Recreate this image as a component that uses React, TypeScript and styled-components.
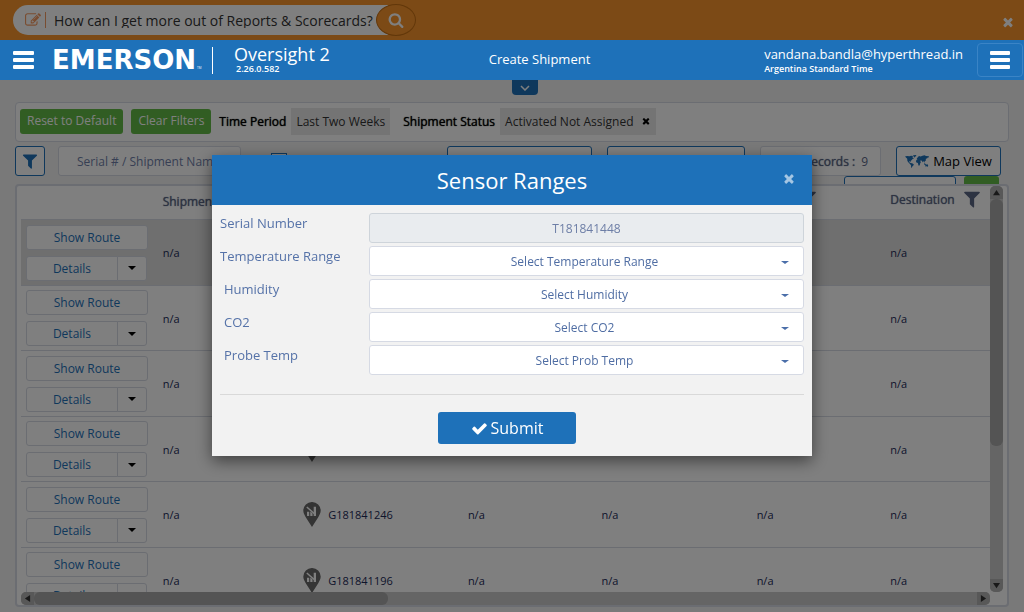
import React from 'react';
import styled, { createGlobalStyle } from 'styled-components';

const blue = '#1e71b9';
const green = '#62bb46';
const line = '#d6dae4';

const Global = createGlobalStyle`
  *, *::before, *::after { box-sizing: border-box; }
  body {
    margin: 0;
    background: #f2f2f2;
    font-family: 'Open Sans', 'Noto Sans', sans-serif;
    font-size: 13px;
    color: #1b2a57;
  }
  button, input, select { font: inherit; margin: 0; }
`;

const paths = {
  search:
    'M1216 832q0-185-131.5-316.5t-316.5-131.5-316.5 131.5-131.5 316.5 131.5 316.5 316.5 131.5 316.5-131.5 131.5-316.5zm512 832q0 52-38 90t-90 38q-54 0-90-38l-343-342q-179 124-399 124-143 0-273.5-55.5t-225-150-150-225-55.5-273.5 55.5-273.5 150-225 225-150 273.5-55.5 273.5 55.5 225 150 150 225 55.5 273.5q0 220-124 399l343 343q37 37 37 90z',
  times:
    'M1490 1322q0 40-28 68l-136 136q-28 28-68 28t-68-28l-294-294-294 294q-28 28-68 28t-68-28l-136-136q-28-28-28-68t28-68l294-294-294-294q-28-28-28-68t28-68l136-136q28-28 68-28t68 28l294 294 294-294q28-28 68-28t68 28l136 136q28 28 28 68t-28 68l-294 294 294 294q28 28 28 68z',
  check:
    'M1671 566q0 40-28 68l-724 724-136 136q-28 28-68 28t-68-28l-136-136-362-362q-28-28-28-68t28-68l136-136q28-28 68-28t68 28l294 295 656-657q28-28 68-28t68 28l136 136q28 28 28 68z',
  filter:
    'M1595 295q17 41-14 70l-493 493v742q0 42-39 59-13 5-25 5-27 0-45-19l-256-256q-19-19-19-45v-486l-493-493q-31-29-14-70 17-39 59-39h1280q42 0 59 39z',
  edit:
    'M888 1184l116-116-152-152-116 116v56h96v96h56zm440-720q-16-16-33 1l-350 350q-17 17-1 33t33-1l350-350q17-17 1-33zm80 594v190q0 119-84.5 203.5t-203.5 84.5h-832q-119 0-203.5-84.5t-84.5-203.5v-832q0-119 84.5-203.5t203.5-84.5h832q63 0 117 25 15 7 18 23 3 17-9 29l-49 49q-14 14-32 8-23-6-45-6h-832q-66 0-113 47t-47 113v832q0 66 47 113t113 47h832q66 0 113-47t47-113v-126q0-13 9-22l64-64q15-15 35-7t20 29zm-96-738l288 288-672 672h-288v-288zm444 132l-92 92-288-288 92-92q28-28 68-28t68 28l152 152q28 28 28 68t-28 68z',
};

const Icon = ({ name, size, color = 'currentColor' }: { name: keyof typeof paths; size: number; color?: string }) => (
  <svg width={size} height={size} viewBox="0 0 1792 1792" fill={color} aria-hidden="true">
    <path d={paths[name]} />
  </svg>
);

const Bars = ({ width }: { width: number }) => (
  <svg width={width} height="18" viewBox="0 0 20 18" preserveAspectRatio="none" fill="#fff" aria-hidden="true">
    <rect width="20" height="4" rx="1" />
    <rect y="7" width="20" height="4" rx="1" />
    <rect y="14" width="20" height="4" rx="1" />
  </svg>
);

const WorldMap = () => (
  <svg width="24" height="13" viewBox="0 0 24 13" fill={blue} aria-hidden="true">
    <path d="M0 1.6 2 1l2.5.3L6 .8 8 1l-.6 1.2L9 3.4 7.6 4 6.8 5 5.7 6 5.9 7 4.5 6.3 4 6.8l1 1L6 8l1.600.5 1.300 1L8 11l-1 .8L6.400 13 6 12.700 6.100 10.500 5 8.900 3.500 7.500 2.400 6 2.200 3.800 1.200 2.800Z" />
    <path d="M8 .3 11 0l.4 1L10 1.800 9.200 2.700 8.600 1.500Z" />
    <path d="M12 3.200 13 2l1-1 1.600.5L17.500.8 19.500.3 21 .9l3 .3-.4 1.200-1.300.4-.3 1.200-.6-.8-.7.8.3 1.200L20 6.200l-.6.6.4 1-.9-.7-.6-1-.6 1.400-.8-1.700-1.100-.2-.8.4 1 .9-.8 1.400-.4 1.700-.9 1-.7-1.400-.3-1.600-1.500-.6-.5-1.500.8-1.200.9-.3-.9-.3Z" />
    <path d="m19 8.300 1.300.4.9 1.100 1-.8 1 1.400-.3 1.300-1.400-.4-1.300.2.200-1.300-1.400-1Z" />
  </svg>
);

const PinIcon = () => (
  <svg width="18" height="25" viewBox="0 0 18 25" aria-hidden="true">
    <path d="M9 0a8.600 8.600 0 0 1 8.700 8.600c0 2.400-1.100 4.300-2.300 6.300L9 25 2.600 14.900C1.400 12.900.3 11 .3 8.600A8.600 8.600 0 0 1 9 0Z" fill="#686868" />
    <path d="M4 14V9.800h2.200V14Zm3.300 0V9.500l2.200 1.800V14Zm3.400 0V4.800H13V14Z" fill="#fff" />
    <path d="m3.800 5 7.700 6.800" stroke="#fff" strokeWidth="1.500" />
  </svg>
);

const Caret = styled.span`
  border: 4px solid transparent;
  border-top-color: currentColor;
  border-bottom: 0;
`;

/* ---------- page ---------- */

const Page = styled.div`
  height: 100vh;
  min-height: 400px;
  display: flex;
  flex-direction: column;
  overflow: hidden;
`;

const IconButton = styled.button`
  display: flex;
  align-items: center;
  justify-content: center;
  padding: 0;
  border: 0;
  background: none;
  color: inherit;
`;

const Banner = styled.div`
  flex: none;
  height: 40px;
  padding: 3px 9px 0 13px;
  display: flex;
  align-items: center;
  justify-content: space-between;
  background: #f8942c;
  color: #fff;
`;

const Ask = styled.form`
  height: 40px;
  margin-top: -3px;
  display: flex;
  align-items: center;
`;

const AskField = styled.label`
  height: 30px;
  padding-left: 12px;
  display: flex;
  align-items: center;
  gap: 4px;
  background: #fff;
  color: #f39a62;
  border-radius: 15px 0 0 15px;
`;

const AskInput = styled.input`
  width: 343px;
  height: 16px;
  padding: 0 0 0 8px;
  border: 0;
  border-left: 1px solid #f39a62;
  background: none;
  color: #333;
  font-size: 14px;
`;

const AskButton = styled(IconButton)`
  width: 40px;
  height: 32px;
  margin-left: -12px;
  border: 1px solid #c56f14;
  border-radius: 50%;
  background: #f8942c;
`;

const Nav = styled.header`
  position: relative;
  z-index: 20;
  flex: none;
  height: 40px;
  padding: 0 1px 0 13px;
  display: grid;
  grid-template-columns: 1fr auto 1fr;
  align-items: center;
  background: ${blue};
  color: #fff;
`;

const Brand = styled.div`
  display: flex;
  align-items: center;
`;

const Logo = styled.svg`
  margin-left: 19px;
  overflow: visible;
`;

const Product = styled.div`
  margin-left: 11px;
  padding-left: 21px;
  height: 27px;
  border-left: 1px solid #fff;
  display: flex;
  flex-direction: column;
  justify-content: center;
`;

const ProductName = styled.span`
  font-size: 18px;
  line-height: 18px;
`;

const Version = styled.span`
  padding-left: 2px;
  font-size: 9px;
  line-height: 12px;
  font-weight: 600;
`;

const NavLink = styled.a`
  margin-left: 43px;
  padding-bottom: 2px;
  color: #fff;
  text-decoration: none;
`;

const Account = styled.div`
  display: flex;
  align-items: center;
  justify-content: flex-end;
  gap: 14px;
`;

const User = styled.div`
  display: flex;
  flex-direction: column;
  line-height: 18px;
`;

const Zone = styled.span`
  font-size: 9px;
  line-height: 12px;
  font-weight: 600;
`;

const MenuButton = styled(IconButton)`
  width: 46px;
  height: 34px;
  border: 1px solid #3a84c6;
  border-radius: 4px;
`;

const PullTab = styled(IconButton)`
  flex: none;
  align-self: center;
  width: 26px;
  height: 15px;
  margin-left: 26px;
  border-radius: 0 0 4px 4px;
  background: ${blue};
  color: #fff;
`;

const Main = styled.main`
  flex: 1;
  min-height: 0;
  padding: 7px 15px 5px;
  display: flex;
  flex-direction: column;
`;

const Filters = styled.section`
  flex: none;
  height: 40px;
  padding: 0 4px 2px;
  display: flex;
  align-items: center;
  border: 1px solid ${line};
  border-radius: 4px;
  background: #fff;
  font-size: 12px;
`;

const GreenButton = styled.button`
  height: 25px;
  margin-right: 8px;
  padding: 0 7px;
  border: 0;
  border-radius: 3px;
  background: ${green};
  color: #fff;
  line-height: 24px;
`;

const FilterName = styled.span`
  color: #000;
  text-shadow: 0 0 1px currentColor;
`;

const Chip = styled.span`
  height: 27px;
  margin: 0 13px 0 5px;
  padding: 0 5px;
  display: flex;
  align-items: center;
  gap: 7px;
  background: #e9e9e9;
  color: #333;
`;

const ChipClose = styled(IconButton)`
  color: #000;
`;

const Toolbar = styled.div`
  flex: none;
  height: 30px;
  margin-top: 4px;
  padding-right: 8px;
  display: flex;
  align-items: center;
`;

const ToolGroup = styled.div`
  margin-left: auto;
  display: flex;
  gap: 15px;
`;

const Box = styled.button<{ $w: number }>`
  width: ${(p) => p.$w}px;
  height: 30px;
  padding: 0;
  display: flex;
  align-items: center;
  justify-content: center;
  gap: 4px;
  border: 1px solid ${blue};
  border-radius: 3px;
  background: #fff;
  color: #000;
`;

const Search = styled.input`
  width: 183px;
  height: 30px;
  margin: 0 30px 0 13px;
  padding: 0 18px;
  border: 1px solid ${line};
  border-radius: 3px;
  background: #fff;
  font-size: 12px;
  &::placeholder { color: #6f7fa8; opacity: 1; }
`;

const Tick = styled.input`
  appearance: none;
  width: 16px;
  height: 16px;
  border: 1px solid ${blue};
  background: #fff;
`;

const Records = styled.div`
  width: 121px;
  height: 30px;
  display: flex;
  align-items: center;
  justify-content: flex-end;
  gap: 6px;
  padding-right: 12px;
  border: 1px solid ${line};
  border-radius: 3px;
  background: #fff;
  color: #5a6685;
  font-size: 12px;
`;

const RecordsName = styled.span`
  text-shadow: 0 0 1px currentColor;
`;

const Tucked = styled.div`
  flex: none;
  height: 8px;
  padding-right: 10px;
  overflow: hidden;
  display: flex;
  justify-content: flex-end;
  gap: 8px;
`;

const Tuck = styled(GreenButton)`
  width: 35px;
  margin: 0;
`;

/* ---------- table ---------- */

const Panel = styled.section`
  flex: 1;
  min-height: 0;
  padding: 0 4px 0 4px;
  display: grid;
  grid-template-columns: minmax(0, 1fr) 13px;
  grid-template-rows: minmax(0, 1fr) 13px;
  border: 2px solid ${line};
  border-radius: 4px;
  background: #fff;
`;

const Viewport = styled.div`
  overflow: hidden;
`;

const Table = styled.table`
  width: 100%;
  table-layout: fixed;
  border-collapse: separate;
  border-spacing: 0;
  font-size: 11px;
`;

const Th = styled.th`
  height: 33px;
  padding: 0 0 2px 6px;
  text-align: left;
  font-size: 12px;
  font-weight: 400;
  color: #5a6685;
  white-space: nowrap;
  text-shadow: 0 0 1px currentColor;
`;

const ThInner = styled.span`
  display: flex;
  align-items: center;
  gap: 7px;
  padding-bottom: 5px;
`;

const Row = styled.tr<{ $selected?: boolean }>`
  height: 65px;
  background: ${(p) => (p.$selected ? '#dedede' : '#fff')};
  &:nth-child(odd) { height: 66px; }
`;

const Td = styled.td`
  padding: 0 0 0 6px;
  border-top: 1px solid ${line};
  &:first-child { padding-left: 5px; }
`;

const Actions = styled.div`
  display: flex;
  flex-direction: column;
  gap: 6px;
`;

const RouteButton = styled.button`
  width: 122px;
  height: 25px;
  padding: 0;
  border: 1px solid ${line};
  border-radius: 3px;
  background: #fff;
  color: ${blue};
  font-size: 12px;
`;

const Split = styled.div`
  display: flex;
`;

const DetailsButton = styled(RouteButton)`
  width: 92px;
  border-radius: 3px 0 0 3px;
`;

const MoreButton = styled(RouteButton)`
  width: 30px;
  margin-left: -1px;
  border-radius: 0 3px 3px 0;
  color: #000;
  display: flex;
  align-items: center;
  justify-content: center;
`;

const Serial = styled.div`
  display: flex;
  align-items: center;
  gap: 7px;
`;

const Scroll = styled.div<{ $horizontal?: boolean }>`
  display: flex;
  flex-direction: ${(p) => (p.$horizontal ? 'row' : 'column')};
  border-radius: 5px;
  overflow: hidden;
  background: #cacaca;
`;

const ScrollEnd = styled.span`
  flex: none;
  width: 13px;
  height: 13px;
  display: flex;
  align-items: center;
  justify-content: center;
  background: #b0b0b0;
  color: #333;
`;

const Thumb = styled.span<{ $share: number }>`
  flex: ${(p) => p.$share} 0 0;
  border-radius: 6px;
  background: #a8a8a8;
`;

const Rest = styled.span<{ $share: number }>`
  flex: ${(p) => p.$share} 0 0;
`;

const Arrow = ({ turn }: { turn: number }) => (
  <svg width="7" height="7" viewBox="0 0 8 8" fill="currentColor" aria-hidden="true">
    <path d="M4 1 8 7H0Z" transform={`rotate(${turn} 4 4)`} />
  </svg>
);

/* ---------- dialog ---------- */

const Overlay = styled.div`
  position: fixed;
  inset: 0;
  z-index: 10;
  padding-top: 155px;
  display: flex;
  justify-content: center;
  align-items: flex-start;
  background: rgba(0, 0, 0, 0.5);
`;

const Dialog = styled.div`
  width: 600px;
  max-width: 100%;
  background: #f2f2f2;
  box-shadow: 0 5px 15px rgba(0, 0, 0, 0.5);
`;

const DialogHead = styled.div`
  height: 50px;
  padding: 0 16px;
  display: grid;
  grid-template-columns: 14px 1fr 14px;
  align-items: center;
  background: ${blue};
  color: #a5c6e3;
`;

const Title = styled.h2`
  grid-column: 2;
  margin: 0;
  text-align: center;
  font-size: 22px;
  font-weight: 400;
  line-height: 30px;
  color: #fff;
`;

const Close = styled(IconButton)`
  padding-bottom: 3px;
`;

const Form = styled.form`
  padding: 8px 8px 12px;
  display: flex;
  flex-direction: column;
  gap: 3px;
`;

const Field = styled.div`
  display: grid;
  grid-template-columns: 149px 1fr;
  align-items: start;
`;

const Label = styled.label<{ $indent?: boolean }>`
  padding-left: ${(p) => (p.$indent ? 4 : 0)}px;
  line-height: 20px;
  color: #5572a8;
`;

const Control = styled.div`
  display: grid;
  align-items: center;
  color: #4a6ea9;
  > * { grid-area: 1 / 1; }
  > span { justify-self: end; margin: 3px 15px 0 0; border-top-width: 3px; pointer-events: none; }
`;

const Text = styled.input`
  width: 100%;
  height: 30px;
  padding: 0 12px;
  border: 1px solid #ced4da;
  border-radius: 3px;
  background: #e9ecef;
  color: #6d7ea6;
  font-size: 12px;
  text-align: center;
`;

const Select = styled.select`
  appearance: none;
  width: 100%;
  height: 30px;
  padding: 0 16px 0 12px;
  border: 1px solid ${line};
  border-radius: 3px;
  background: #fff;
  color: #4f6da3;
  font-size: 12px;
  text-align: center;
  text-align-last: center;
`;

const Footer = styled.div`
  margin-top: 16px;
  padding: 17px 10px 0 0;
  border-top: 1px solid #d9d9d9;
  display: flex;
  justify-content: center;
`;

const Submit = styled.button`
  width: 138px;
  height: 32px;
  padding: 0;
  display: flex;
  align-items: center;
  justify-content: center;
  gap: 3px;
  border: 0;
  border-radius: 3px;
  background: ${blue};
  color: #fff;
  font-size: 16px;
`;

const rows = ['T181841448', '', '', '', 'G181841246', 'G181841196'];
const selects = [
  { id: 'temperature', label: 'Temperature Range', option: 'Select Temperature Range', indent: false },
  { id: 'humidity', label: 'Humidity', option: 'Select Humidity', indent: true },
  { id: 'co2', label: 'CO2', option: 'Select CO2', indent: true },
  { id: 'probe', label: 'Probe Temp', option: 'Select Prob Temp', indent: true },
];

export default function App() {
  return (
    <Page>
      <Global />
      <Banner>
        <Ask>
          <AskField>
            <Icon name="edit" size={16} />
            <AskInput aria-label="Ask a question" defaultValue="How can I get more out of Reports & Scorecards?" />
          </AskField>
          <AskButton type="button" aria-label="Search">
            <Icon name="search" size={16} />
          </AskButton>
        </Ask>
        <IconButton aria-label="Dismiss">
          <Icon name="times" size={14} />
        </IconButton>
      </Banner>

      <Nav>
        <Brand>
          <IconButton aria-label="Menu">
            <Bars width={21} />
          </IconButton>
          <Logo width="148" height="24" viewBox="0 0 148 24" fill="#fff">
            <text x="-1" y="21" fontFamily="'DejaVu Sans', sans-serif" fontWeight="700" fontSize="26">EMERSON</text>
            <text x="144" y="21" fontFamily="'Open Sans', sans-serif" fontSize="3">TM</text>
          </Logo>
          <Product>
            <ProductName>Oversight 2</ProductName>
            <Version>2.26.0.582</Version>
          </Product>
        </Brand>
        <NavLink href="#create">Create Shipment</NavLink>
        <Account>
          <User>
            <span>vandana.bandla@hyperthread.in</span>
            <Zone>Argentina Standard Time</Zone>
          </User>
          <MenuButton aria-label="Account menu">
            <Bars width={20} />
          </MenuButton>
        </Account>
      </Nav>

      <PullTab aria-label="Expand">
        <svg width="10" height="6" viewBox="0 0 10 6" fill="none" stroke="currentColor" strokeWidth="1.5" aria-hidden="true">
          <path d="m1 1 4 4 4-4" />
        </svg>
      </PullTab>

      <Main>
        <Filters>
          <GreenButton>Reset to Default</GreenButton>
          <GreenButton>Clear Filters</GreenButton>
          <FilterName>Time Period</FilterName>
          <Chip>Last Two Weeks</Chip>
          <FilterName>Shipment Status</FilterName>
          <Chip>
            Activated Not Assigned
            <ChipClose aria-label="Remove filter">
              <Icon name="times" size={10} />
            </ChipClose>
          </Chip>
        </Filters>

        <Toolbar>
          <Box $w={30} aria-label="Filter">
            <Icon name="filter" size={18} color={blue} />
          </Box>
          <Search aria-label="Serial # / Shipment Name" placeholder="Serial # / Shipment Name" />
          <Tick type="checkbox" aria-label="Select all" />
          <ToolGroup>
            <Box $w={145} aria-label="Sort" />
            <Box $w={138} aria-label="Group" />
            <Records>
              <RecordsName>Total Records :</RecordsName>
              <span>9</span>
            </Records>
            <Box $w={105}>
              <WorldMap />
              Map View
            </Box>
          </ToolGroup>
        </Toolbar>
        <Tucked>
          <Box $w={112} aria-label="Page" />
          <Tuck aria-label="Go" />
        </Tucked>

        <Panel>
          <Viewport>
            <Table>
              <colgroup>
                <col style={{ width: '14%' }} />
                <col style={{ width: '14.5%' }} />
                <col style={{ width: '17%' }} />
                <col style={{ width: '13.8%' }} />
                <col style={{ width: '16%' }} />
                <col style={{ width: '13.8%' }} />
                <col />
              </colgroup>
              <thead>
                <tr>
                  <Th />
                  <Th>Shipment</Th>
                  <Th />
                  <Th />
                  <Th />
                  <Th>
                    <ThInner>
                      Origin
                      <Icon name="filter" size={20} />
                    </ThInner>
                  </Th>
                  <Th>
                    <ThInner>
                      Destination
                      <Icon name="filter" size={20} />
                    </ThInner>
                  </Th>
                </tr>
              </thead>
              <tbody>
                {rows.map((serial, i) => (
                  <Row key={i} $selected={i === 0}>
                    <Td>
                      <Actions>
                        <RouteButton>Show Route</RouteButton>
                        <Split>
                          <DetailsButton>Details</DetailsButton>
                          <MoreButton aria-label="More actions">
                            <Caret />
                          </MoreButton>
                        </Split>
                      </Actions>
                    </Td>
                    <Td>n/a</Td>
                    <Td>
                      <Serial>
                        <PinIcon />
                        {serial}
                      </Serial>
                    </Td>
                    <Td>n/a</Td>
                    <Td>n/a</Td>
                    <Td>n/a</Td>
                    <Td>n/a</Td>
                  </Row>
                ))}
              </tbody>
            </Table>
          </Viewport>
          <Scroll>
            <ScrollEnd><Arrow turn={0} /></ScrollEnd>
            <Thumb $share={65} />
            <Rest $share={35} />
            <ScrollEnd><Arrow turn={180} /></ScrollEnd>
          </Scroll>
          <Scroll $horizontal>
            <ScrollEnd><Arrow turn={270} /></ScrollEnd>
            <Thumb $share={3} />
            <Rest $share={5} />
            <ScrollEnd><Arrow turn={90} /></ScrollEnd>
          </Scroll>
        </Panel>
      </Main>

      <Overlay>
        <Dialog role="dialog" aria-modal="true" aria-labelledby="dialog-title">
          <DialogHead>
            <Title id="dialog-title">Sensor Ranges</Title>
            <Close aria-label="Close">
              <Icon name="times" size={19} />
            </Close>
          </DialogHead>
          <Form>
            <Field>
              <Label htmlFor="serial">Serial Number</Label>
              <Text id="serial" readOnly value="T181841448" />
            </Field>
            {selects.map((s) => (
              <Field key={s.id}>
                <Label htmlFor={s.id} $indent={s.indent}>{s.label}</Label>
                <Control>
                  <Select id={s.id}>
                    <option>{s.option}</option>
                  </Select>
                  <Caret />
                </Control>
              </Field>
            ))}
            <Footer>
              <Submit type="button">
                <Icon name="check" size={17} />
                Submit
              </Submit>
            </Footer>
          </Form>
        </Dialog>
      </Overlay>
    </Page>
  );
}
